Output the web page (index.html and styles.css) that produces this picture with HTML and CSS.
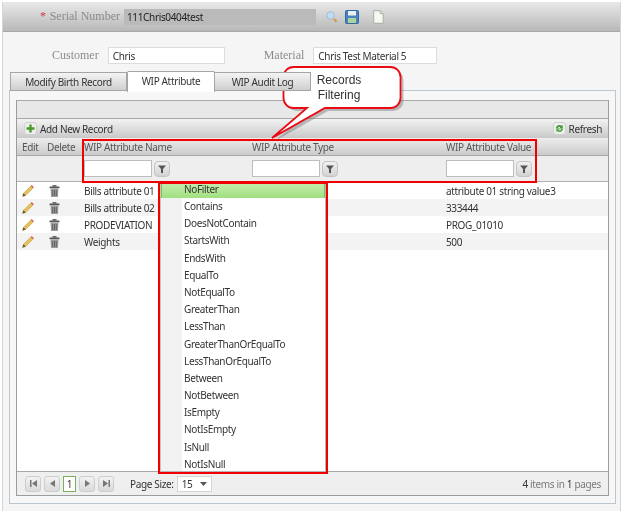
FILE: index.html

```html
<!DOCTYPE html>
<html lang="en">
<head>
  <meta charset="UTF-8">
  <title>WIP Attribute</title>
  <link rel="stylesheet" href="styles.css">
</head>
<body>
  <div class="page">
    <div class="serial-bar">
      <span class="req">*</span>
      <span class="serif-label">Serial Number</span>
      <div class="serial-value">111Chris0404test</div>
      <svg class="bar-icon search" width="12" height="12" viewBox="0 0 12 12"><circle cx="4.500" cy="4.500" r="3.800" fill="#c4dcf0" stroke="#9db9d2"/><path d="M8 8l2.600 2.600" stroke="#d79a55" stroke-width="2.400"/></svg>
      <svg class="bar-icon save" width="14" height="14" viewBox="0 0 14 14"><rect x=".5" y=".5" width="13" height="13" rx="1" fill="#4a82c0" stroke="#35689f"/><rect x="3" y="1" width="8" height="4.500" fill="#e9f0f8"/><rect x="3" y="8" width="8" height="5" fill="#a9d49a"/></svg>
      <svg class="bar-icon doc" width="11" height="14" viewBox="0 0 11 14"><path d="M.7.7h6.500l3 3v9.600H.7z" fill="#f6f8f2" stroke="#a6b0a2"/><path d="M7.200.7v3h3" fill="#dfe4da" stroke="#a6b0a2"/></svg>
    </div>

    <div class="info-row">
      <span class="serif-label customer-label">Customer</span>
      <div class="info-input customer-input">Chris</div>
      <span class="serif-label material-label">Material</span>
      <div class="info-input material-input">Chris Test Material 5</div>
    </div>

    <div class="tabs">
      <div class="tab tab-birth">Modify Birth Record</div>
      <div class="tab tab-active">WIP Attribute</div>
      <div class="tab tab-audit">WIP Audit Log</div>
    </div>

    <div class="tab-panel">
      <div class="grid">
        <div class="group-bar"></div>
        <div class="command-bar">
          <div class="command">
            <span class="cmd-icon"><svg width="9" height="9" viewBox="0 0 9 9"><path d="M4.500 .5v8M.5 4.500h8" stroke="#4c9a2a" stroke-width="2.400"/></svg></span>
            Add New Record
          </div>
          <div class="command">
            <span class="cmd-icon"><svg width="11" height="11" viewBox="0 0 12 12"><path d="M2 6a4 4 0 0 1 6.500-3l1-1v4h-4l1.500-1.500a2.200 2.200 0 0 0-3 1.500z" fill="#3f9a35"/><path d="M10 6a4 4 0 0 1-6.500 3l-1 1v-4h4l-1.500 1.500a2.200 2.200 0 0 0 3-1.500z" fill="#58b04a"/></svg></span>
            Refresh
          </div>
        </div>

        <div class="row head-row">
          <div class="cell-edit">Edit</div>
          <div class="cell-delete">Delete</div>
          <div class="cell-name">WIP Attribute Name</div>
          <div>WIP Attribute Type</div>
          <div>WIP Attribute Value</div>
        </div>

        <div class="row filter-row">
          <div></div>
          <div></div>
          <div class="filter cell-name"><div class="filter-input"></div><div class="filter-btn"><svg width="8" height="8" viewBox="0 0 8 8"><path d="M0 .5h8L5 4v4H3V4z" fill="#555"/></svg></div></div>
          <div class="filter"><div class="filter-input"></div><div class="filter-btn"><svg width="8" height="8" viewBox="0 0 8 8"><path d="M0 .5h8L5 4v4H3V4z" fill="#555"/></svg></div></div>
          <div class="filter"><div class="filter-input"></div><div class="filter-btn"><svg width="8" height="8" viewBox="0 0 8 8"><path d="M0 .5h8L5 4v4H3V4z" fill="#555"/></svg></div></div>
        </div>

        <div class="grid-body">
          <div class="row data-row">
            <div class="cell-edit"><svg class="pencil" width="12" height="12" viewBox="0 0 12 12"><use href="#pencil"/></svg></div>
            <div class="cell-delete"><svg class="trash" width="11" height="12" viewBox="0 0 11 12"><use href="#trash"/></svg></div>
            <div class="cell-name">Bills attribute 01</div>
            <div></div>
            <div>attribute 01 string value3</div>
          </div>
          <div class="row data-row alt">
            <div class="cell-edit"><svg class="pencil" width="12" height="12" viewBox="0 0 12 12"><use href="#pencil"/></svg></div>
            <div class="cell-delete"><svg class="trash" width="11" height="12" viewBox="0 0 11 12"><use href="#trash"/></svg></div>
            <div class="cell-name">Bills attribute 02</div>
            <div></div>
            <div>333444</div>
          </div>
          <div class="row data-row">
            <div class="cell-edit"><svg class="pencil" width="12" height="12" viewBox="0 0 12 12"><use href="#pencil"/></svg></div>
            <div class="cell-delete"><svg class="trash" width="11" height="12" viewBox="0 0 11 12"><use href="#trash"/></svg></div>
            <div class="cell-name">PRODEVIATION</div>
            <div></div>
            <div>PROG_01010</div>
          </div>
          <div class="row data-row alt">
            <div class="cell-edit"><svg class="pencil" width="12" height="12" viewBox="0 0 12 12"><use href="#pencil"/></svg></div>
            <div class="cell-delete"><svg class="trash" width="11" height="12" viewBox="0 0 11 12"><use href="#trash"/></svg></div>
            <div class="cell-name">Weights</div>
            <div></div>
            <div>500</div>
          </div>
        </div>

        <div class="pager">
          <div class="pg-btn"><svg width="7" height="7" viewBox="0 0 7 7"><path d="M0 0h1.500v7H0zM7 0v7L2 3.500z" fill="#777"/></svg></div>
          <div class="pg-btn"><svg width="5" height="7" viewBox="0 0 5 7"><path d="M5 0v7L0 3.500z" fill="#777"/></svg></div>
          <div class="pg-num">1</div>
          <div class="pg-btn"><svg width="5" height="7" viewBox="0 0 5 7"><path d="M0 0v7l5-3.500z" fill="#777"/></svg></div>
          <div class="pg-btn"><svg width="7" height="7" viewBox="0 0 7 7"><path d="M0 0v7l5-3.500zM5.500 0H7v7H5.500z" fill="#777"/></svg></div>
          <span class="pg-size-label">Page Size:</span>
          <div class="pg-size">15<svg width="7" height="4" viewBox="0 0 7 4"><path d="M0 0h7L3.500 4z" fill="#555"/></svg></div>
          <div class="pg-info"><b>4</b> items in <b>1</b> pages</div>
        </div>
      </div>
    </div>
  </div>

  <!-- annotations on top of the screenshot -->
  <svg class="callout" width="140" height="85" viewBox="0 0 140 85">
    <path d="M23.500 7h97a10 10 0 0 1 10 10v21a10 10 0 0 1-10 10H55L2 78 37 48H23.500a10 10 0 0 1-10-10V17a10 10 0 0 1 10-10z" fill="#777" opacity=".45" transform="translate(3 3)"/>
    <path d="M23.500 7h97a10 10 0 0 1 10 10v21a10 10 0 0 1-10 10H55L2 78 37 48H23.500a10 10 0 0 1-10-10V17a10 10 0 0 1 10-10z" fill="#fff" stroke="#ea0a14" stroke-width="1.800"/>
  </svg>
  <div class="callout-text">Records<br>Filtering</div>
  <div class="mark-filter"></div>

  <div class="menu">
    <div class="menu-item on">NoFilter</div>
    <div class="menu-item">Contains</div>
    <div class="menu-item">DoesNotContain</div>
    <div class="menu-item">StartsWith</div>
    <div class="menu-item">EndsWith</div>
    <div class="menu-item">EqualTo</div>
    <div class="menu-item">NotEqualTo</div>
    <div class="menu-item">GreaterThan</div>
    <div class="menu-item">LessThan</div>
    <div class="menu-item">GreaterThanOrEqualTo</div>
    <div class="menu-item">LessThanOrEqualTo</div>
    <div class="menu-item">Between</div>
    <div class="menu-item">NotBetween</div>
    <div class="menu-item">IsEmpty</div>
    <div class="menu-item">NotIsEmpty</div>
    <div class="menu-item">IsNull</div>
    <div class="menu-item">NotIsNull</div>
  </div>

  <svg width="0" height="0" class="defs">
    <defs>
      <g id="pencil">
        <path d="M.5 11.500l1-3.200 7-7 2.200 2.200-7 7z" fill="#e6c15a" stroke="#b8963c" stroke-width=".5"/>
        <path d="M.5 11.500l1-3.200 2.200 2.200z" fill="#5b5648"/>
        <path d="M8.700 1.100l1-1 2.200 2.200-1 1z" fill="#d9534f"/>
      </g>
      <g id="trash">
        <rect x=".5" y="1.500" width="10" height="1.800" rx=".5" fill="#555"/>
        <rect x="3.500" y="0" width="4" height="1.800" fill="#6a6a6a"/>
        <path d="M1.500 3.500h8l-.6 8.500H2.100z" fill="#9a9a9a"/>
        <path d="M3.700 5v6M5.500 5v6M7.300 5v6" stroke="#555" stroke-width=".8"/>
      </g>
    </defs>
  </svg>
</body>
</html>
```

FILE: styles.css

```css
html, body {
  margin: 0;
  height: 511px;
  overflow: hidden;
}
body {
  position: relative;
  background: #fff;
  font-family: "Noto Sans", sans-serif;
  font-size: 10px;
  letter-spacing: -.35px;
  color: #333;
  filter: blur(.3px);
}
.defs {
  position: absolute;
}

.page {
  margin: 2px 2px 0 2px;
  height: 509px;
  box-sizing: border-box;
  background: #f5f5f5;
  border-left: 1px solid #d5d5d5;
  border-right: 1px solid #d5d5d5;
}

.serif-label {
  font-family: "Liberation Serif", serif;
  font-size: 12px;
  letter-spacing: 0;
  color: #8b8b8b;
}

/* top bar */
.serial-bar {
  height: 30px;
  display: flex;
  align-items: center;
  background: linear-gradient(#e9e9e9, #b8b8b8);
  border-bottom: 1px solid #a8a8a8;
  box-sizing: border-box;
}
.req {
  margin-left: 37px;
  margin-right: 4px;
  color: #d8383c;
  font-family: "Liberation Serif", serif;
  font-size: 12px;
}
.serial-value {
  margin-left: 4px;
  width: 192px;
  height: 16px;
  line-height: 16px;
  padding-left: 3px;
  box-sizing: border-box;
  background: #bababa;
  color: #222;
}
.bar-icon {
  flex: none;
}
.search {
  margin-left: 10px;
}
.save {
  margin-left: 7px;
}
.doc {
  margin-left: 14px;
}

/* customer / material */
.info-row {
  height: 17px;
  margin-top: 15px;
  display: flex;
  align-items: center;
}
.customer-label {
  margin-left: 49px;
}
.info-input {
  height: 17px;
  line-height: 16px;
  box-sizing: border-box;
  padding-left: 4px;
  background: #fff;
  border: 1px solid #dcdcdc;
  color: #333;
}
.customer-input {
  margin-left: 9px;
  width: 117px;
}
.material-label {
  margin-left: 39px;
}
.material-input {
  margin-left: 9px;
  width: 124px;
}

/* tabs */
.tabs {
  display: flex;
  margin: 7px 0 0 7px;
  height: 20px;
  position: relative;
  z-index: 1;
}
.tab {
  height: 19px;
  margin-top: 1px;
  line-height: 19px;
  text-align: center;
  box-sizing: border-box;
  border: 1px solid #a5a5a5;
  border-left-width: 0;
  background: linear-gradient(#f4f4f4, #cfcfcf);
  color: #333;
}
.tab-birth {
  width: 117px;
  border-left-width: 1px;
}
.tab-active {
  width: 88px;
  height: 21px;
  margin-top: 0;
  background: #fff;
  border-left-width: 1px;
  border-bottom: 0;
  border-radius: 2px 2px 0 0;
}
.tab-audit {
  width: 96px;
}

.tab-panel {
  margin: -1px 4px 0 6px;
  height: 414px;
  box-sizing: border-box;
  padding: 9px 6px 7px 6px;
  background: #f7f7f7;
  border: 1px solid #b9c7d2;
}

/* grid */
.grid {
  height: 396px;
  box-sizing: border-box;
  border: 1px solid #9c9c9c;
  border-top: 0;
  display: flex;
  flex-direction: column;
  background: #fff;
}
.group-bar {
  height: 18px;
  flex: none;
  background: #e8e8e8;
  border-top: 1px solid #a8a8a8;
  box-sizing: border-box;
}
.command-bar {
  height: 20px;
  flex: none;
  box-sizing: border-box;
  display: flex;
  justify-content: space-between;
  align-items: center;
  padding: 0 6px 0 7px;
  border-top: 1px solid #a8a8a8;
  background: linear-gradient(#f3f3f3, #c9c9c9);
}
.command {
  display: flex;
  align-items: center;
  gap: 3px;
  color: #333;
}
.cmd-icon {
  width: 13px;
  height: 13px;
  box-sizing: border-box;
  display: flex;
  align-items: center;
  justify-content: center;
  border: 1px solid #d0d0d0;
  border-radius: 3px;
  background: #eee;
}
.row {
  display: grid;
  grid-template-columns: 26px 39px 170px 194px 1fr;
  align-items: center;
  flex: none;
}
.cell-edit {
  padding-left: 5px;
}
.cell-delete {
  padding-left: 4px;
}
.cell-name {
  padding-left: 2px;
}
.head-row {
  height: 18px;
  color: #555;
  background: linear-gradient(#ededed, #cbcbcb);
  border-bottom: 1px solid #a8a8a8;
  box-sizing: border-box;
}
.filter-row {
  height: 26px;
  background: #eeeeee;
  border-bottom: 1px solid #b0b0b0;
  box-sizing: border-box;
}
.filter {
  display: flex;
  align-items: center;
  gap: 2px;
}
.filter-input {
  width: 68px;
  height: 17px;
  box-sizing: border-box;
  background: #fff;
  border: 1px solid #bdbdbd;
}
.filter-btn {
  width: 16px;
  height: 16px;
  box-sizing: border-box;
  display: flex;
  align-items: center;
  justify-content: center;
  border: 1px solid #c4c4c4;
  border-radius: 4px;
  background: linear-gradient(#f1f1f1, #d2d2d2);
}
.grid-body {
  flex: 1;
}
.data-row {
  height: 17px;
  background: #fff;
  color: #333;
}
.data-row.alt {
  background: #f3f3f3;
}
.data-row .cell-edit,
.data-row .cell-delete {
  display: flex;
  align-items: center;
}
.trash {
  margin-left: 2px;
}

/* pager */
.pager {
  height: 24px;
  flex: none;
  box-sizing: border-box;
  border-top: 1px solid #a8a8a8;
  background: #efefef;
  display: flex;
  align-items: center;
  padding: 0 7px 0 8px;
}
.pg-btn {
  width: 16px;
  height: 16px;
  box-sizing: border-box;
  margin-right: 3px;
  display: flex;
  align-items: center;
  justify-content: center;
  border: 1px solid #cdcdcd;
  border-radius: 3px;
  background: linear-gradient(#f2f2f2, #dadada);
}
.pg-num {
  width: 13px;
  height: 16px;
  line-height: 15px;
  margin-right: 3px;
  text-align: center;
  box-sizing: border-box;
  background: #fff;
  border: 1px solid #79b060;
}
.pg-size-label {
  margin-left: 13px;
  color: #333;
}
.pg-size {
  margin-left: 3px;
  width: 35px;
  height: 16px;
  padding: 0 4px;
  box-sizing: border-box;
  display: flex;
  align-items: center;
  justify-content: space-between;
  background: #fff;
  border: 1px solid #d5d5d5;
}
.pg-info {
  margin-left: auto;
  color: #7a7a7a;
}
.pg-info b {
  font-weight: 400;
  color: #333;
}

/* annotations */
.callout {
  position: absolute;
  left: 270px;
  top: 60px;
}
.callout-text {
  position: absolute;
  left: 286px;
  top: 73px;
  width: 106px;
  text-align: center;
  font-family: "Liberation Sans", sans-serif;
  font-size: 12px;
  letter-spacing: 0;
  line-height: 15px;
  color: #333;
}
.mark-filter {
  position: absolute;
  left: 82px;
  top: 139px;
  width: 455px;
  height: 44px;
  box-sizing: border-box;
  border: 2px solid #f00000;
}
.menu {
  position: absolute;
  left: 158px;
  top: 182px;
  width: 170px;
  height: 292px;
  box-sizing: border-box;
  border: 2px solid #f00000;
  background: linear-gradient(90deg, #f2f2f2 22px, #fff 22px);
  box-shadow: inset -1px -1px 0 #b5b5b5, inset 1px 0 0 #c5c5c5;
}
.menu-item {
  height: 17.200px;
  line-height: 15px;
  padding-left: 24px;
  color: #333;
}
.menu-item.on {
  margin: 0 1px 1px;
  padding-left: 22px;
  height: 14px;
  line-height: 11px;
  background: linear-gradient(#c3eeaa, #a0df80);
  border-left: 1px solid #7cc45a;
  border-right: 1px solid #7cc45a;
  box-sizing: border-box;
}
```
